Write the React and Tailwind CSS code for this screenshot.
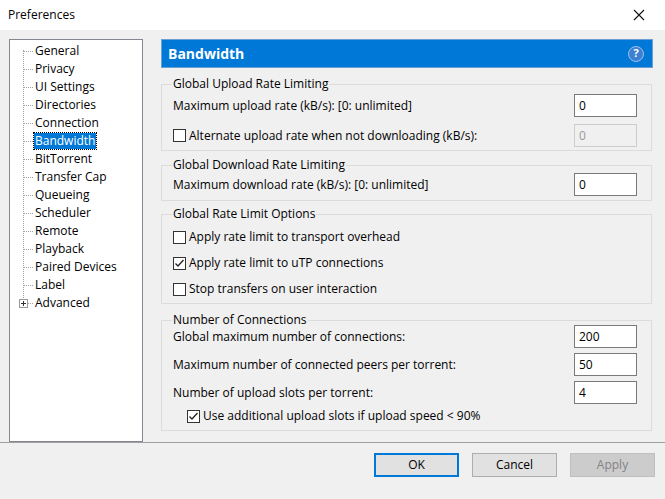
import React from "react";

const items = ["General","Privacy","UI Settings","Directories","Connection","Bandwidth","BitTorrent","Transfer Cap","Queueing","Scheduler","Remote","Playback","Paired Devices","Label","Advanced"];

const Check = ({ checked }) => (
  <span className="w-[13px] h-[13px] border border-[#333] bg-white flex items-center justify-center shrink-0">
    {checked && (
      <svg width="11" height="11" viewBox="0 0 11 11"><path d="M1.5 5.5 L4 8 L9.5 2" stroke="#222" strokeWidth="1.3" fill="none" /></svg>
    )}
  </span>
);

const Input = ({ value, disabled }) => (
  <div className={`w-[63px] h-[23px] border px-[4px] flex items-center ${disabled ? "border-[#ccc] bg-[#f0f0f0] text-[#9a9a9a]" : "border-[#7a7a7a] bg-white text-black"}`}>{value}</div>
);

const Group = ({ title, h, children, mt }) => (
  <fieldset className={`border border-[#dcdcdc] ml-0 mr-[1px] px-[11px] ${mt}`} style={{ height: h }}>
    <legend className="px-[1px] ml-[-1px] leading-[14px]">{title}</legend>
    {children}
  </fieldset>
);

const Row = ({ label, value, disabled, className = "" }) => (
  <div className={`flex items-center justify-between pr-[3px] ${className}`}>
    <span>{label}</span>
    <Input value={value} disabled={disabled} />
  </div>
);

const CheckRow = ({ label, checked, className = "" }) => (
  <div className={`flex items-center gap-[3px] ${className}`}>
    <Check checked={checked} />
    <span>{label}</span>
  </div>
);

export default function App() {
  return (
    <div className="w-[665px] h-[499px] bg-[#f0f0f0] text-[12px] text-black flex flex-col" style={{ fontFamily: '"Open Sans", "Noto Sans", sans-serif' }}>
      <div className="h-[30px] bg-white flex items-center justify-between pl-[8px] pr-[20px] shrink-0">
        <span className="text-[12px]">Preferences</span>
        <svg width="12" height="12" viewBox="0 0 12 12"><path d="M1 1 L11 11 M11 1 L1 11" stroke="#111" strokeWidth="1.1" /></svg>
      </div>
      <div className="flex pt-[9px] pl-[9px] h-[412px] shrink-0">
        <div className="w-[134px] h-[403px] bg-white border border-[#828790] pt-[2px] pl-[1px] relative">
          <div className="absolute left-[13px] top-[10px] h-[248px] border-l border-dotted border-[#a0a0a0]" />
          {items.map((it, i) => (
            <div key={it} className="h-[18px] flex items-center relative">
              {it === "Advanced" ? (
                <span className="absolute left-[8px] w-[9px] h-[9px] border border-[#999] bg-white flex items-center justify-center z-10">
                  <svg width="7" height="7" viewBox="0 0 7 7"><path d="M1 3.5 H6 M3.5 1 V6" stroke="#333" strokeWidth="1" /></svg>
                </span>
              ) : null}
              <span className="w-[10px] ml-[12px] border-t border-dotted border-[#a0a0a0]" />
              <span className={`ml-[1px] px-[1px] leading-[16px] ${it === "Bandwidth" ? "bg-[#0078d7] text-white outline-1 outline-dotted outline-black" : ""}`}>{it}</span>
            </div>
          ))}
        </div>
        <div className="ml-[18px] w-[492px] flex flex-col">
          <div className="h-[29px] bg-[#0078d7] border border-[#6a9fd4] flex items-center justify-between pl-[6px] pr-[8px] text-white font-bold text-[14px]">
            <span>Bandwidth</span>
            <span className="w-[16px] h-[16px] rounded-full bg-[#3d7fd0] border border-[#9cc0ee] flex items-center justify-center text-[11px] font-bold">?</span>
          </div>
          <Group title="Global Upload Rate Limiting" h={74} mt="mt-[9px]">
            <Row label="Maximum upload rate (kB/s): [0: unlimited]" value="0" className="mt-[3px]" />
            <div className="flex items-center justify-between pr-[3px] mt-[7px]">
              <CheckRow label="Alternate upload rate when not downloading (kB/s):" />
              <Input value="0" disabled />
            </div>
          </Group>
          <Group title="Global Download Rate Limiting" h={43} mt="mt-[7px]">
            <Row label="Maximum download rate (kB/s): [0: unlimited]" value="0" className="mt-[1px]" />
          </Group>
          <Group title="Global Rate Limit Options" h={97} mt="mt-[6px]">
            <CheckRow label="Apply rate limit to transport overhead" className="mt-[7px]" />
            <CheckRow label="Apply rate limit to uTP connections" checked className="mt-[8px]" />
            <CheckRow label="Stop transfers on user interaction" className="mt-[8px]" />
          </Group>
          <Group title="Number of Connections" h={118} mt="mt-[9px]">
            <Row label="Global maximum number of connections:" value="200" className="mt-[-2px]" />
            <Row label="Maximum number of connected peers per torrent:" value="50" className="mt-[5px]" />
            <Row label="Number of upload slots per torrent:" value="4" className="mt-[5px]" />
            <CheckRow label="Use additional upload slots if upload speed < 90%" checked className="ml-[14px] mt-[3px]" />
          </Group>
        </div>
      </div>
      <div className="border-t border-[#a0a0a0] flex-1 flex justify-end items-start pt-[10px] pr-[10px] gap-[13px]">
        <button className="w-[85px] h-[24px] bg-[#e1e1e1] border-2 border-[#0078d7]">OK</button>
        <button className="w-[85px] h-[24px] bg-[#e1e1e1] border border-[#adadad]">Cancel</button>
        <button className="w-[85px] h-[24px] bg-[#cccccc] border border-[#bfbfbf] text-[#838383]">Apply</button>
      </div>
    </div>
  );
}
